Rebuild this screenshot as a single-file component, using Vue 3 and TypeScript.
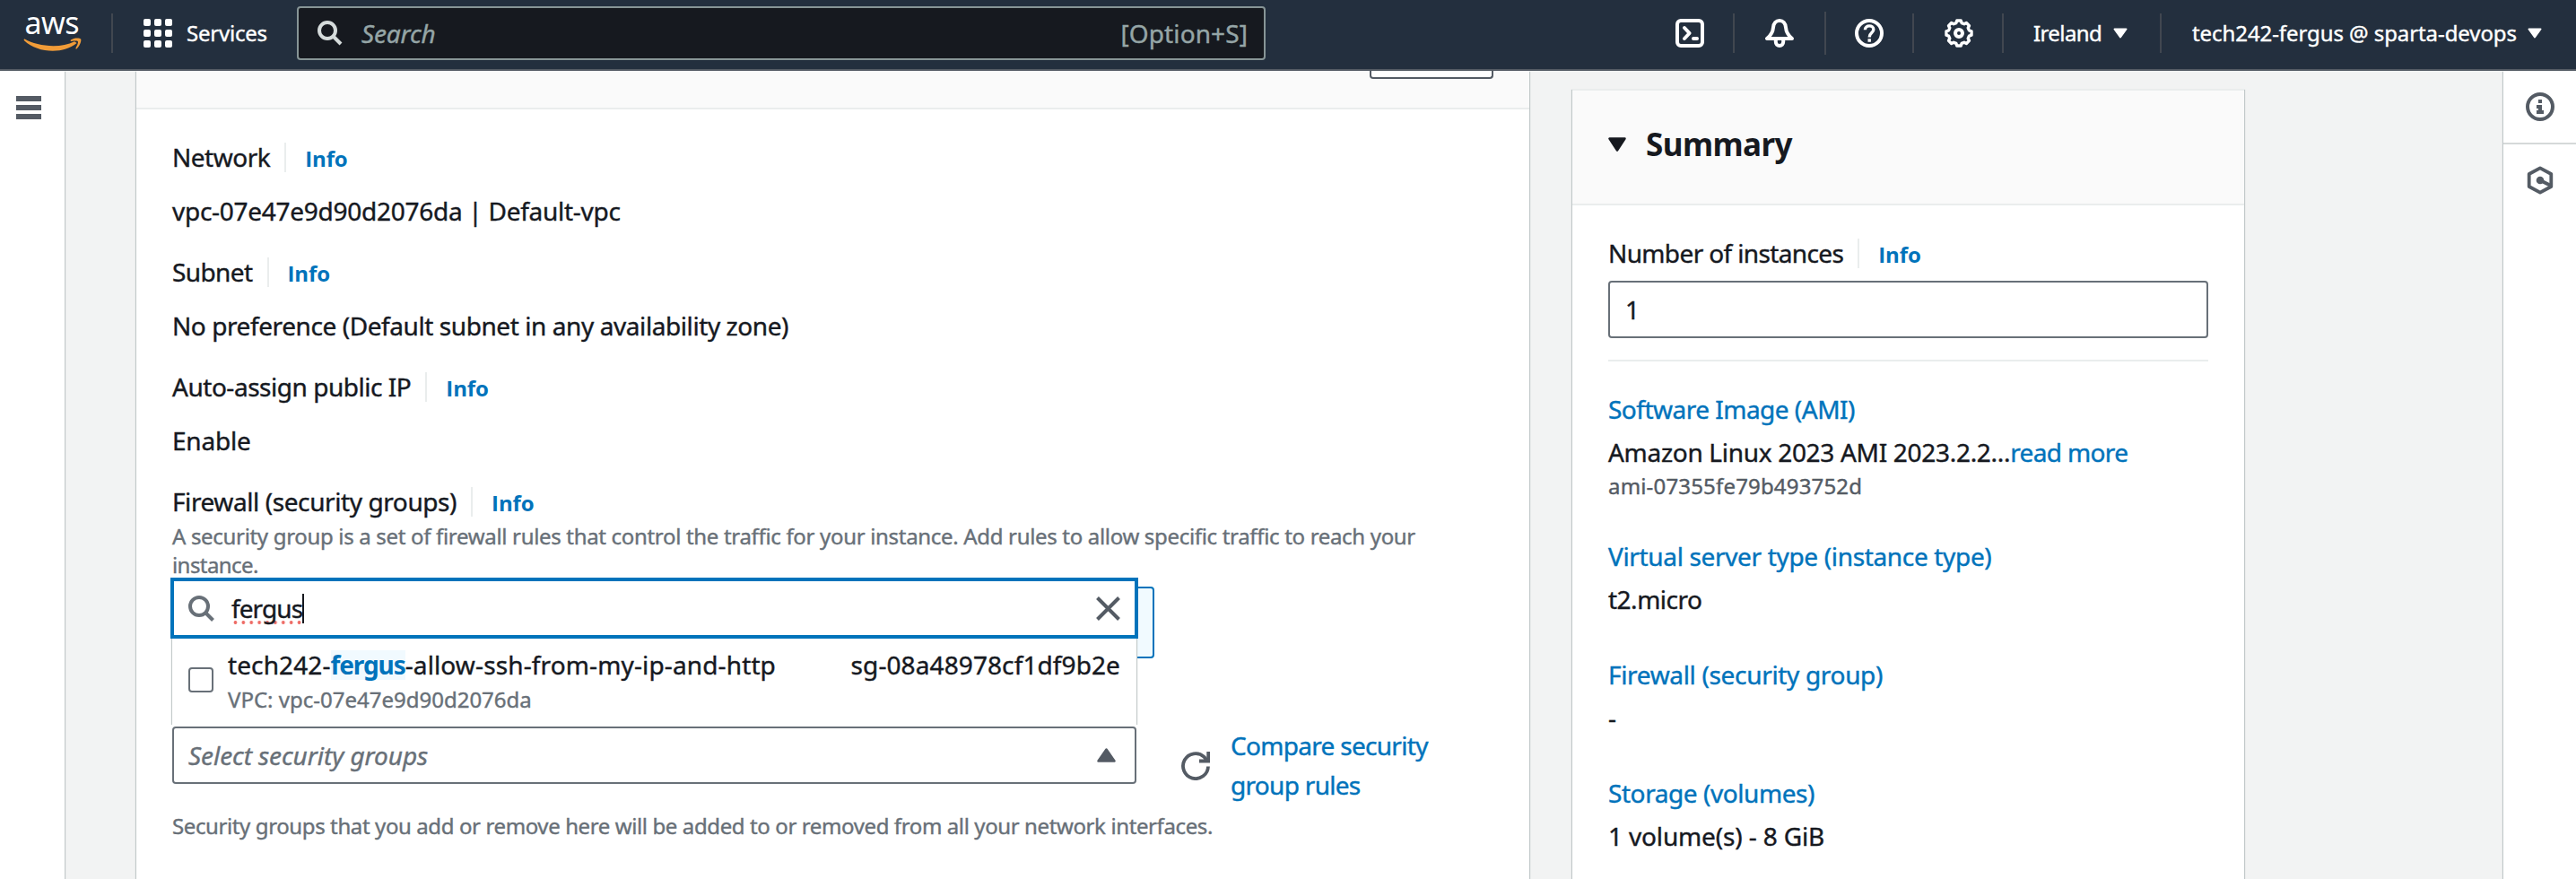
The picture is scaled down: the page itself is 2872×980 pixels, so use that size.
<script setup lang="ts">
interface Field {
  label: string
  value: string
}

interface SummaryItem {
  link: string
  value: string
  more?: string
  note?: string
}

const fields: Field[] = [
  { label: 'Network', value: 'vpc-07e47e9d90d2076da | Default-vpc' },
  { label: 'Subnet', value: 'No preference (Default subnet in any availability zone)' },
  { label: 'Auto-assign public IP', value: 'Enable' },
]

const summary: SummaryItem[] = [
  {
    link: 'Software Image (AMI)',
    value: 'Amazon Linux 2023 AMI 2023.2.2...',
    more: 'read more',
    note: 'ami-07355fe79b493752d',
  },
  { link: 'Virtual server type (instance type)', value: 't2.micro' },
  { link: 'Firewall (security group)', value: '-' },
  { link: 'Storage (volumes)', value: '1 volume(s) - 8 GiB' },
]

// Letter spacing, in pixels, of each label and value
const tracking: Record<string, number> = {
  Network: -0.5,
  'vpc-07e47e9d90d2076da | Default-vpc': -0.27,
  Subnet: -0.6,
  'No preference (Default subnet in any availability zone)': -0.42,
  'Auto-assign public IP': -0.47,
  Enable: -0.2,
  'Software Image (AMI)': -0.51,
  'Amazon Linux 2023 AMI 2023.2.2...': -0.3,
  'Virtual server type (instance type)': -0.34,
  't2.micro': -0.5,
  'Firewall (security group)': -0.33,
  'Storage (volumes)': -0.43,
  '1 volume(s) - 8 GiB': -0.15,
}

const spacing = (text: string) => ({ letterSpacing: `${tracking[text] ?? 0}px` })

// Outline of the eight-toothed settings gear on a 16-unit grid
const gear = Array.from({ length: 8 }, (_, i) =>
  [
    [-9, 7.1],
    [9, 7.1],
    [15, 5.9],
    [30, 5.9],
  ]
    .map(([offset, radius]) => {
      const angle = ((i * 45 + offset) * Math.PI) / 180
      return `${(8 + radius * Math.sin(angle)).toFixed(2)},${(8 - radius * Math.cos(angle)).toFixed(2)}`
    })
    .join(' '),
).join(' ')
</script>

<template>
  <div class="page">
    <header class="topbar">
      <svg class="logo" viewBox="0 -15 68 74" aria-label="aws">
        <text x="1.5" y="23" textLength="61" lengthAdjust="spacing">aws</text>
        <path d="M1.6 28.500C15 36.500 41 39.500 57 31.200L59.600 33C45 45.500 16 44.500 1 30.200C.2 29.200.8 28.200 1.600 28.500Z" />
        <path
          d="M53 29.600C56 27 63 27 64.200 28.600C65 31.500 62.500 37 59.500 39.400C58.500 39.800 58.200 39.200 58.600 38.300C60 35.500 61.600 32.200 60.800 31.200C59.800 30.200 56.500 30.600 53.800 30.900C52.400 31 52.200 30.200 53 29.600Z"
        />
      </svg>
      <i class="vr first"></i>
      <div class="grid-icon"><b v-for="n in 9" :key="n"></b></div>
      <span class="services">Services</span>
      <div class="searchbox">
        <svg class="glass" viewBox="0 0 28 28"><circle cx="11" cy="11" r="9" /><path d="M17.500 17.500L26 26" /></svg>
        <em>Search</em>
        <span class="shortcut">[Option+S]</span>
      </div>
      <div class="tools">
        <svg class="tool" viewBox="0 0 16 16">
          <rect x="1" y="1" width="14" height="14" rx="2" />
          <path d="M5 5L7.800 8L5 11M10 11H12" />
        </svg>
        <i class="vr"></i>
        <svg class="tool" viewBox="0 0 16 16">
          <path d="M8 1C6 1 4.700 2.500 4.500 4.800C4.300 7.600 3.200 9.200 1 11H15C12.800 9.200 11.700 7.600 11.500 4.800C11.300 2.500 10 1 8 1Z" />
          <path d="M5.900 11V12.900A2.100 2.100 0 0 0 10.100 12.900V11" />
        </svg>
        <i class="vr tall"></i>
        <svg class="tool" viewBox="0 0 16 16">
          <circle cx="8" cy="8" r="7" />
          <path class="thin" d="M5.700 6.100C5.700 3.200 10.400 3.300 10.400 6C10.400 7.800 8.100 7.800 8.100 10.200M8.100 11.100V12.900" />
        </svg>
        <i class="vr"></i>
        <svg class="tool gear" viewBox="0 0 16 16"><polygon :points="gear" /><circle cx="8" cy="8" r="2" /></svg>
        <i class="vr"></i>
        <div class="menu region">
          <span>Ireland</span>
          <svg class="caret" viewBox="0 0 16 12"><path d="M1.500 1.500H14.500L8 10.500Z" /></svg>
        </div>
        <i class="vr wide"></i>
        <div class="menu account">
          <span>tech242-fergus @ sparta-devops</span>
          <svg class="caret" viewBox="0 0 16 12"><path d="M1.500 1.500H14.500L8 10.500Z" /></svg>
        </div>
      </div>
    </header>

    <div class="body">
      <nav class="rail left"><div class="burger"><b></b><b></b><b></b></div></nav>

      <main class="card network">
        <div class="card-head"><div class="edit"></div></div>
        <div class="card-body">
          <section v-for="f in fields" :key="f.label" class="field">
            <div class="label">
              <span :style="spacing(f.label)">{{ f.label }}</span><i></i><a>Info</a>
            </div>
            <p :style="spacing(f.value)">{{ f.value }}</p>
          </section>

          <div class="label"><span class="fw">Firewall (security groups)</span><i></i><a>Info</a></div>
          <p class="hint desc">
            A security group is a set of firewall rules that control the traffic for your instance. Add rules to allow
            specific traffic to reach your <span class="last">instance.</span>
          </p>

          <div class="picker">
            <div class="tile"></div>
            <div class="row">
              <div class="select">
                <em>Select security groups</em>
                <svg viewBox="0 0 21 16"><path d="M10.500 1.500L19.500 14.500H1.500Z" /></svg>
              </div>
              <svg class="refresh" viewBox="0 0 32 32">
                <path d="M30 16.500A14 14 0 1 1 25.500 5.800L29 10.500" />
                <path d="M30.200 0V10.500H20" />
              </svg>
              <a class="compare"><span>Compare security</span><br /><span>group rules</span></a>
            </div>

            <div class="dropdown">
              <div class="filter">
                <svg class="glass" viewBox="0 0 29 29"><circle cx="12" cy="12" r="10" /><path d="M19 19L27.500 27.500" /></svg>
                <span class="typed">fergus</span>
                <i class="cursor"></i>
                <svg class="clear" viewBox="0 0 27 27"><path d="M1.500 1.500L25.500 25.500M25.500 1.500L1.500 25.500" /></svg>
              </div>
              <div class="option">
                <div class="check"></div>
                <div class="lines">
                  <div class="name">
                    <span class="pre">tech242-</span><mark>fergus</mark><span class="post">-allow-ssh-from-my-ip-and-http</span>
                    <span class="sg">sg-08a48978cf1df9b2e</span>
                  </div>
                  <div class="vpc">VPC: vpc-07e47e9d90d2076da</div>
                </div>
              </div>
            </div>
          </div>

          <p class="hint note">
            Security groups that you add or remove here will be added to or removed from all your network interfaces.
          </p>
        </div>
      </main>

      <aside class="card summary">
        <div class="summary-head">
          <svg viewBox="0 0 20 16"><path d="M1.500 1.500H18.500L10 14.500Z" /></svg>
          <h2>Summary</h2>
        </div>
        <div class="summary-body">
          <div class="label"><span class="count">Number of instances</span><i></i><a>Info</a></div>
          <div class="input">1</div>
          <div class="rule"></div>
          <section v-for="s in summary" :key="s.link" class="item">
            <a :style="spacing(s.link)">{{ s.link }}</a>
            <p><span :style="spacing(s.value)">{{ s.value }}</span><a v-if="s.more" class="more">{{ s.more }}</a></p>
            <small v-if="s.note">{{ s.note }}</small>
          </section>
        </div>
      </aside>

      <nav class="rail right">
        <div class="slot">
          <svg viewBox="0 0 16 16">
            <circle cx="8" cy="8" r="7" />
            <path class="solid" d="M7 4H9V6H7ZM6 7H9V10H10V12H6V10H7V9H6Z" />
          </svg>
        </div>
        <div class="slot">
          <svg viewBox="0 0 32 32">
            <path class="hex" d="M16 2.300L28.300 9V23L16 29.700L3.700 23V9Z" />
            <path class="hex" d="M16 16L28 22" />
            <circle class="solid" cx="16" cy="16" r="4.300" />
          </svg>
        </div>
      </nav>
    </div>
  </div>
</template>

<style>
html,
body {
  margin: 0;
  overflow: hidden;
}
</style>

<style scoped>
.page {
  width: 2872px;
  height: 980px;
  overflow: hidden;
  background: #f2f3f3;
  color: #16191f;
  font: 28px/44px 'Noto Sans', 'Open Sans', sans-serif;
  -webkit-text-stroke: 0.4px currentColor;
}
.page * {
  box-sizing: border-box;
}
p,
h2 {
  margin: 0;
}
a {
  color: #0073bb;
}
svg {
  display: block;
  flex: none;
  fill: none;
}

/* Top bar */
.topbar {
  position: relative;
  z-index: 2;
  display: flex;
  align-items: center;
  height: 79px;
  padding: 0 38px 3px 26px;
  border-bottom: 2px solid #545b64;
  background: #232f3e;
  color: #fff;
  font-size: 24px;
  white-space: nowrap;
}
.logo {
  width: 68px;
  height: 74px;
}
.logo text {
  fill: #fff;
  font-size: 34px;
}
.logo path {
  fill: #f19c38;
}
.vr {
  flex: none;
  width: 2px;
  height: 44px;
  margin: 0 34px 0 32px;
  background: #414750;
}
.vr.first {
  margin: 0 34px 0 30px;
}
.vr.tall {
  height: 48px;
  margin: 0 32px 0 34px;
}
.vr.wide {
  margin: 0 34px 0 36px;
}
.grid-icon {
  display: grid;
  grid-template-columns: repeat(3, 8px);
  gap: 4px;
}
.grid-icon b {
  height: 8px;
  border-radius: 2px;
  background: #fff;
}
.services {
  width: 123px;
  margin-left: 16px;
  letter-spacing: -0.22px;
}
.searchbox {
  display: flex;
  align-items: center;
  width: 1080px;
  height: 60px;
  padding: 0 18px 0 21px;
  border: 2px solid #879596;
  border-radius: 4px;
  background: #16191f;
  color: #95a5a6;
  font-size: 28px;
}
.searchbox .glass {
  width: 28px;
  height: 28px;
  stroke: #d5dbdb;
  stroke-width: 4;
}
.searchbox em {
  margin-left: 21px;
  letter-spacing: -0.16px;
}
.shortcut {
  margin-left: auto;
  letter-spacing: 0.1px;
}
.tools {
  display: flex;
  align-items: center;
  margin-left: auto;
}
.tool {
  width: 32px;
  height: 32px;
  stroke: #fff;
  stroke-width: 2;
  stroke-linecap: round;
  stroke-linejoin: round;
}
.tool .thin {
  stroke-width: 1.7;
  stroke-linecap: butt;
}
.gear polygon {
  stroke-width: 1.7;
}
.menu {
  display: flex;
  align-items: center;
  justify-content: space-between;
}
.region {
  width: 104px;
}
.region span {
  margin-left: -1px;
  letter-spacing: -0.6px;
}
.account {
  width: 390px;
}
.account span {
  letter-spacing: -0.08px;
}
.caret {
  width: 16px;
  height: 12px;
}
.caret path {
  fill: #fff;
  stroke: #fff;
  stroke-width: 2;
  stroke-linejoin: round;
}

/* Page columns */
.body {
  display: flex;
  height: 901px;
}
.rail,
.card {
  flex: none;
  background: #fff;
  box-shadow:
    -1px 1px 1px rgba(0, 28, 36, 0.2),
    1px 1px 1px rgba(0, 28, 36, 0.2);
}
.rail.left {
  width: 72px;
  padding: 28px 26px 0 18px;
}
.burger {
  display: grid;
  gap: 4px;
}
.burger b {
  height: 6px;
  background: #545b64;
}
.rail.right {
  width: 81px;
  margin-left: auto;
}
.slot {
  height: 82px;
  padding: 24px 0 0 25px;
  border-bottom: 2px solid #d5d9d9;
}
.slot + .slot {
  border: 0;
}
.slot svg {
  width: 32px;
  height: 32px;
  stroke: #545b64;
  stroke-width: 2;
}
.slot .solid {
  fill: #545b64;
  stroke: none;
}
.slot .hex {
  stroke-width: 3.8;
  stroke-linejoin: round;
}

/* Network settings card */
.network {
  width: 1553px;
  height: 920px;
  margin-left: 80px;
}
.card-head {
  height: 43px;
  padding: 0 40px;
  border-bottom: 2px solid #eaeded;
  background: #fafafa;
}
.edit {
  width: 138px;
  height: 9px;
  margin-left: auto;
  border: 2px solid #545b64;
  border-top: 0;
  border-radius: 0 0 4px 4px;
  background: #fff;
}
.card-body {
  padding: 37px 40px 0;
}
.label {
  display: flex;
  align-items: baseline;
  height: 33px;
  line-height: 32px;
}
.label i {
  align-self: flex-start;
  width: 2px;
  height: 33px;
  margin: 0 21px 0 16px;
  background: #eaeded;
}
.label a {
  font: bold 24px/32px 'Open Sans', 'Noto Sans', sans-serif;
  letter-spacing: -0.1px;
  -webkit-text-stroke: 0;
}
.fw {
  letter-spacing: -0.41px;
}
.field {
  height: 128px;
}
.field p {
  margin-top: 21px;
}
.hint {
  color: #687078;
  font-size: 24px;
  line-height: 32px;
}
.desc {
  width: 1400px;
  margin-top: 6px;
  letter-spacing: -0.32px;
}
.last {
  letter-spacing: -0.57px;
}
.picker {
  position: relative;
  padding-top: 8px;
}
.tile {
  width: 1095px;
  height: 80px;
  border: 2px solid #0073bb;
  border-radius: 4px;
  background: #f1faff;
}
.row {
  display: flex;
  height: 88px;
  margin-top: 75px;
}
.select {
  display: flex;
  align-items: center;
  justify-content: space-between;
  width: 1075px;
  height: 64px;
  margin-top: 1px;
  padding: 0 21px 0 16px;
  border: 2px solid #687078;
  border-radius: 4px;
  background: #fff;
  color: #687078;
}
.select em {
  letter-spacing: -0.07px;
}
.select svg {
  width: 21px;
  height: 16px;
}
.select path {
  fill: #545b64;
  stroke: #545b64;
  stroke-width: 2.5;
  stroke-linejoin: round;
}
.refresh {
  width: 32px;
  height: 32px;
  margin: 29px 0 0 50px;
  stroke: #545b64;
  stroke-width: 3.8;
}
.compare {
  margin-left: 23px;
  letter-spacing: -0.7px;
}
.dropdown {
  position: absolute;
  top: -2px;
  left: -2px;
  width: 1079px;
}
.filter {
  position: relative;
  z-index: 1;
  display: flex;
  align-items: center;
  height: 68px;
  padding: 0 16px;
  border: 4px solid #0073bb;
  background: #fff;
}
.filter .glass {
  width: 29px;
  height: 29px;
  stroke: #687078;
  stroke-width: 4;
}
.typed {
  height: 34px;
  margin: 1px 0 0 19px;
  letter-spacing: -0.9px;
  line-height: 32px;
  background: radial-gradient(circle at 50% 50%, #ee6b65 1.6px, transparent 2.2px) 0 100% / 8.9px 4px repeat-x;
}
.cursor {
  width: 2px;
  height: 33px;
  background: #16191f;
}
.clear {
  width: 27px;
  height: 27px;
  margin-left: auto;
  stroke: #545b64;
  stroke-width: 4;
}
.option {
  display: flex;
  height: 96px;
  margin: 0 2px;
  padding: 13px 18px 0;
  background: #fff;
  box-shadow: 0 0 1px 1px #c3caca;
  clip-path: inset(0 -3px 0 -3px);
}
.check {
  width: 28px;
  height: 28px;
  margin-top: 19px;
  border: 2px solid #687078;
  border-radius: 4px;
}
.lines {
  flex: 1;
  margin-left: 16px;
}
.name {
  display: flex;
  height: 33px;
  line-height: 32px;
}
.pre {
  letter-spacing: 0.1px;
}
mark {
  height: 33px;
  background: #f1faff;
  color: #0073bb;
  font-weight: bold;
  letter-spacing: -1.1px;
  -webkit-text-stroke: 0;
}
.post {
  letter-spacing: 0.13px;
}
.sg {
  margin-left: auto;
  letter-spacing: 0.1px;
}
.vpc {
  margin-top: 6px;
  color: #687078;
  font-size: 24px;
  line-height: 32px;
}
.note {
  margin-top: 8px;
  letter-spacing: -0.39px;
}

/* Summary card */
.summary {
  width: 749px;
  height: 900px;
  margin: 20px 0 0 48px;
  border-top: 2px solid #eaeded;
}
.summary-head {
  display: flex;
  height: 128px;
  padding: 38px 40px 0;
  border-bottom: 2px solid #eaeded;
  background: #fafafa;
}
.summary-head svg {
  width: 20px;
  height: 16px;
  margin-top: 14px;
}
.summary-head path {
  fill: #16191f;
  stroke: #16191f;
  stroke-width: 2.5;
  stroke-linejoin: round;
}
h2 {
  margin-left: 22px;
  font-size: 35px;
  line-height: 44px;
  letter-spacing: -0.55px;
  -webkit-text-stroke: 0;
}
.summary-body {
  padding: 37px 40px 0;
}
.count {
  letter-spacing: -0.63px;
}
.input {
  height: 64px;
  margin-top: 14px;
  padding: 8px 17px;
  border: 2px solid #687078;
  border-radius: 4px;
}
.rule {
  height: 2px;
  margin: 24px 0 31px;
  background: #eaeded;
}
.item {
  margin-bottom: 40px;
}
.item > a {
  display: block;
}
.item p {
  margin-top: 4px;
}
.more {
  letter-spacing: -0.64px;
}
.item small {
  display: block;
  color: #545b64;
  font-size: 24px;
  line-height: 32px;
  letter-spacing: 0.17px;
}
</style>
